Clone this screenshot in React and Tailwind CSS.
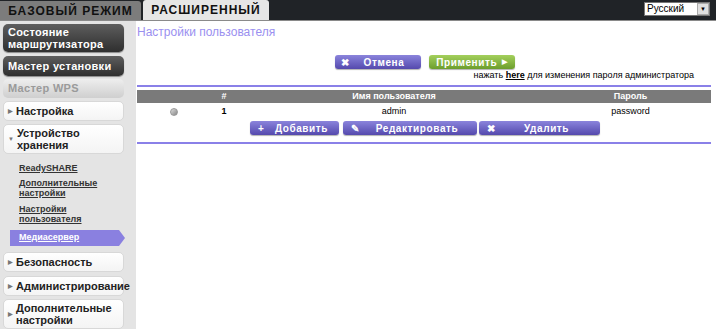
import { useState } from "react";

const bold = { fontFamily: '"Liberation Sans", Arial, sans-serif' };
const plain = { fontFamily: '"Liberation Sans", Arial, sans-serif' };

function DarkItem({ children, className = "" }) {
  return (
    <div
      className={`mx-[3px] w-[121px] rounded-[5px] bg-gradient-to-b from-[#5e5e5e] to-[#2f2f2f] px-[5px] text-[11px] font-bold leading-[12px] tracking-[0.3px] text-white shadow-[0_1px_1px_rgba(0,0,0,0.4)] ${className}`}
      style={bold}
    >
      {children}
    </div>
  );
}

function MenuItem({ children, open, className = "" }) {
  return (
    <div
      className={`mx-[3px] flex w-[121px] items-center gap-[3px] whitespace-nowrap rounded-[5px] border border-[#d8d8d8] bg-gradient-to-b from-white to-[#f4f4f4] px-[4px] text-[11px] font-bold leading-[12px] text-[#222] ${className}`}
      style={bold}
    >
      <span className="text-[6px] text-[#777]">{open ? "▼" : "▶"}</span>
      <span>{children}</span>
    </div>
  );
}

function SubLink({ children, className = "" }) {
  return (
    <div
      className={`ml-[19px] text-[9px] font-bold leading-[10px] text-[#333] underline ${className}`}
      style={bold}
    >
      {children}
    </div>
  );
}

function PurpleButton({ icon, children, className = "" }) {
  return (
    <button
      className={`flex h-[14px] items-center rounded-[3px] bg-gradient-to-b from-[#8b84dc] to-[#5549ad] px-[8px] text-[10px] font-bold tracking-[0.6px] text-white shadow-[0_1px_1px_rgba(0,0,0,0.3)] ${className}`}
      style={bold}
    >
      <span className="w-[14px] text-left text-[10px]">{icon}</span>
      <span className="flex-1 text-center">{children}</span>
    </button>
  );
}

export default function App() {
  const [lang, setLang] = useState("ru");

  return (
    <div className="flex h-[329px] w-[716px] flex-col overflow-hidden bg-[#e4e4e4]">
      {/* top bar */}
      <div className="flex h-[22px] items-end border-b border-[#8a8a8a] bg-[#202327]">
        <div
          className="flex h-[19px] w-[141px] items-center justify-center rounded-tr-[3px] bg-[#7c7c7c] text-[12px] font-bold tracking-[1px] text-[#111]"
          style={bold}
        >
          БАЗОВЫЙ РЕЖИМ
        </div>
        <div
          className="ml-[2px] flex h-[20px] w-[126px] items-center justify-center rounded-t-[3px] bg-[#e6e6e6] text-[12px] font-bold tracking-[1px] text-[#111]"
          style={bold}
        >
          РАСШИРЕННЫЙ
        </div>
        <div className="flex-1" />
        <div className="mb-[4px] mr-[6px] flex h-[14px] w-[66px] items-center border border-[#777] bg-white">
          <select
            value={lang}
            onChange={(e) => setLang(e.target.value)}
            className="h-full flex-1 appearance-none bg-white pl-[2px] text-[10px] leading-[12px] text-black outline-none"
            style={plain}
          >
            <option value="ru">Русский</option>
          </select>
          <div className="flex h-[12px] w-[12px] items-center justify-center border border-[#aaa] bg-[#e0e0e0] text-[6px] text-black">
            ▼
          </div>
        </div>
      </div>

      <div className="flex flex-1">
        {/* sidebar */}
        <div className="flex w-[136px] flex-col pt-[3px]">
          <DarkItem className="py-[2px]">
            Состояние
            <br />
            маршрутизатора
          </DarkItem>
          <DarkItem className="mt-[4px] flex h-[20px] items-center">Мастер установки</DarkItem>
          <div
            className="mx-[3px] mt-[3px] flex h-[19px] w-[121px] items-center rounded-[5px] bg-gradient-to-b from-[#eeeeee] to-[#cfcfcf] px-[5px] text-[11px] font-bold tracking-[0.3px] text-[#9a9a9a]"
            style={bold}
          >
            Мастер WPS
          </div>
          <MenuItem className="mt-[3px] h-[20px]">Настройка</MenuItem>
          <MenuItem open className="mt-[3px] h-[30px]">
            Устройство
            <br />
            хранения
          </MenuItem>
          <SubLink className="mt-[9px]">ReadySHARE</SubLink>
          <SubLink className="mt-[5px]">
            Дополнительные
            <br />
            настройки
          </SubLink>
          <SubLink className="mt-[6px]">
            Настройки
            <br />
            пользователя
          </SubLink>
          <div className="mt-[6px] flex h-[16px] w-[125px] pl-[10px]">
            <div
              className="flex flex-1 items-center bg-[#8a80e0] pl-[9px] text-[9px] font-bold text-white underline"
              style={bold}
            >
              Медиасервер
            </div>
            <svg width="6" height="16" viewBox="0 0 6 16">
              <polygon points="0,0 6,8 0,16" fill="#8a80e0" />
            </svg>
          </div>
          <MenuItem className="mt-[6px] h-[20px]">Безопасность</MenuItem>
          <MenuItem className="mt-[4px] h-[20px]">Администрирование</MenuItem>
          <MenuItem className="mt-[3px] h-[30px]">
            Дополнительные
            <br />
            настройки
          </MenuItem>
        </div>

        {/* content */}
        <div className="flex flex-1 flex-col bg-white pl-[1px] pr-[5px]">
          <div className="mt-[5px] text-[12px] leading-[13px] text-[#9a90f0]" style={plain}>
            Настройки пользователя
          </div>

          <div className="mt-[16px] flex gap-[8px] pl-[198px]">
            <PurpleButton icon="✖" className="w-[86px] pl-[6px]">
              Отмена
            </PurpleButton>
            <button
              className="flex h-[14px] w-[86px] items-center justify-center gap-[5px] rounded-[3px] bg-gradient-to-b from-[#a4d05c] to-[#6c9e2c] text-[10px] font-bold tracking-[0.6px] text-white shadow-[0_1px_1px_rgba(0,0,0,0.3)]"
              style={bold}
            >
              Применить
              <span className="text-[7px]">▶</span>
            </button>
          </div>

          <div className="mt-[1px] pr-[17px] text-right text-[9px] leading-[11px] text-black" style={plain}>
            нажать <b className="underline">here</b> для изменения пароля администратора
          </div>

          <div className="mt-[4px] h-[2px] bg-[#8a80e8]" />

          <div
            className="mt-[3px] grid h-[13px] grid-cols-[73px_28px_312px_1fr] items-center bg-[#7a7a7a] text-[9px] font-bold text-white"
            style={bold}
          >
            <div />
            <div className="text-center">#</div>
            <div className="text-center">Имя пользователя</div>
            <div className="text-center">Пароль</div>
          </div>

          <div
            className="mt-[2px] grid h-[12px] grid-cols-[73px_28px_312px_1fr] items-center text-[9px] text-black"
            style={plain}
          >
            <div className="flex justify-center">
              <div className="h-[8px] w-[8px] rounded-full border border-[#999] bg-gradient-to-br from-[#ddd] to-[#888]" />
            </div>
            <div className="text-center font-bold">1</div>
            <div className="text-center">admin</div>
            <div className="text-center">password</div>
          </div>

          <div className="mt-[4px] flex pl-[113px]">
            <PurpleButton icon="+" className="w-[89px]">
              Добавить
            </PurpleButton>
            <PurpleButton icon="✎" className="ml-[4px] w-[134px]">
              Редактировать
            </PurpleButton>
            <PurpleButton icon="✖" className="ml-[2px] w-[121px]">
              Удалить
            </PurpleButton>
          </div>

          <div className="mt-[7px] h-[2px] bg-[#8a80e8]" />
        </div>
      </div>
    </div>
  );
}
